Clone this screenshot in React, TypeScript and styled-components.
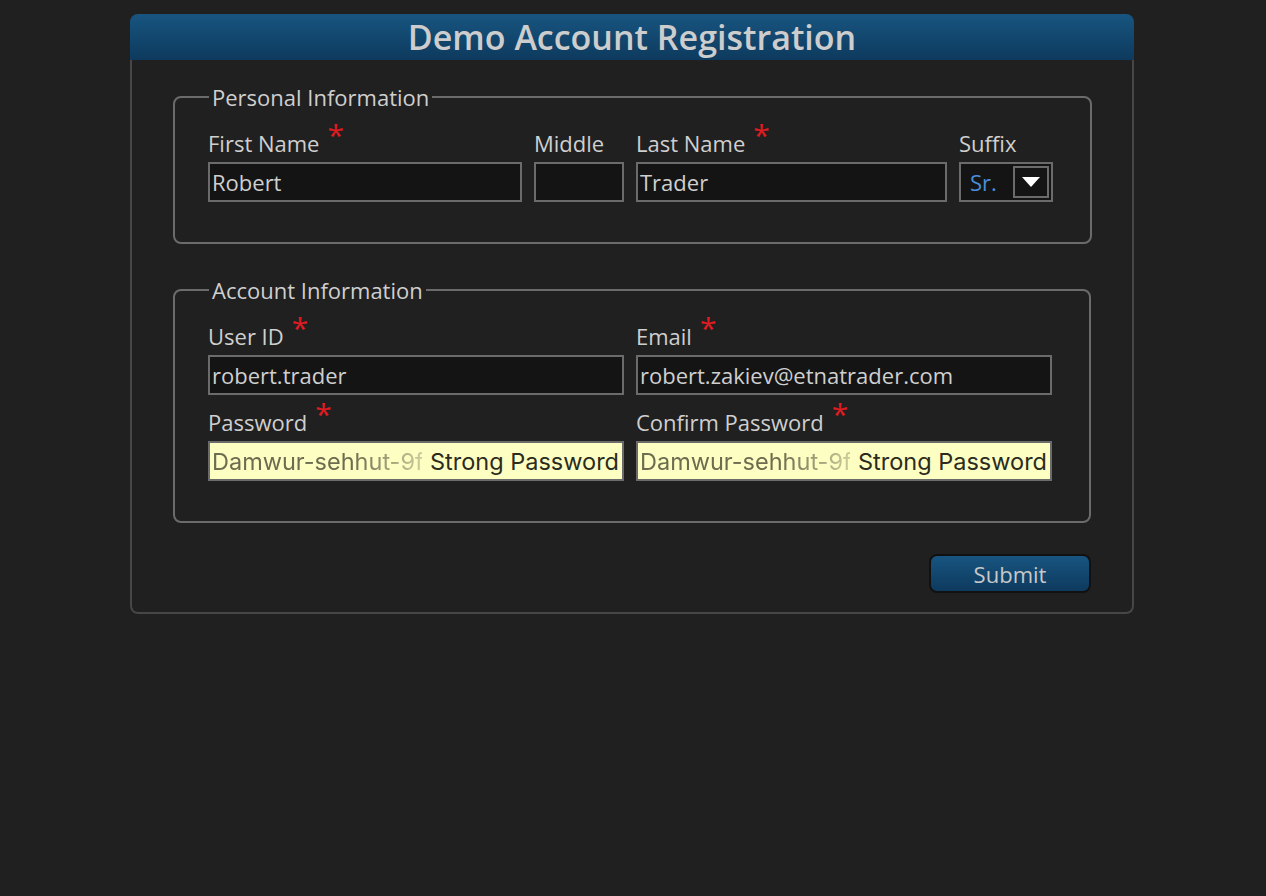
import React from "react";
import styled, { createGlobalStyle } from "styled-components";

const Global = createGlobalStyle`
  html, body { margin: 0; padding: 0; background: #202020; }
  body { font-family: "Open Sans", "Noto Sans", sans-serif; color: #cfcfcf; }
  * { box-sizing: border-box; }
`;

const Page = styled.div`
  width: 1266px;
  height: 896px;
  padding-top: 14px;
  display: flex;
  justify-content: center;
  padding-right: 2px;
`;

const Card = styled.div`
  width: 1004px;
  height: 600px;
  display: flex;
  flex-direction: column;
`;

const Header = styled.div`
  height: 46px;
  border-radius: 8px 8px 0 0;
  background: linear-gradient(#175580, #0e3a5e);
  display: flex;
  align-items: center;
  justify-content: center;
`;

const Title = styled.h1`
  margin: 0;
  font-size: 34px;
  font-weight: 600;
  color: #cdcdcd;
  line-height: 46px;
`;

const Body = styled.div`
  flex: 1;
  border: 2px solid #474747;
  border-top: none;
  border-radius: 0 0 8px 8px;
  padding: 25px 41px 0 41px;
  display: flex;
  flex-direction: column;
`;

const Fieldset = styled.fieldset<{ $h: number; $mb: number }>`
  margin: 0 0 ${(p) => p.$mb}px 0;
  height: ${(p) => p.$h}px;
  border: 2px solid #6b6b6b;
  border-radius: 8px;
  padding: 0 37px 0 33px;
  display: flex;
  flex-direction: column;
  gap: 6px;
`;

const Legend = styled.legend`
  font-size: 22px;
  color: #cfcfcf;
  padding: 0 3px;
  margin-left: 1px;
  line-height: 24px;
`;

const Row = styled.div<{ $cols: string }>`
  display: grid;
  grid-template-columns: ${(p) => p.$cols};
  column-gap: 12px;
`;

const Field = styled.div`
  display: flex;
  flex-direction: column;
`;

const Label = styled.label<{ $h?: number }>`
  font-size: 22px;
  color: #cfcfcf;
  height: ${(p) => p.$h ?? 53}px;
  display: flex;
  align-items: flex-end;
  padding-bottom: 4px;
  white-space: nowrap;
`;

const Star = styled.span`
  color: #e01b22;
  font-size: 30px;
  line-height: 1;
  align-self: flex-end;
  margin-left: 8px;
  margin-bottom: 8px;
`;

const Input = styled.div<{ $color?: string }>`
  height: 40px;
  border: 2px solid #6b6b6b;
  background: #141414;
  font-size: 22px;
  color: ${(p) => p.$color || "#cfcfcf"};
  display: flex;
  align-items: center;
  padding-left: 2px;
  position: relative;
  overflow: hidden;
  white-space: nowrap;
`;

const SelectBox = styled(Input)`
  justify-content: space-between;
  padding: 0 2px 0 9px;
`;

const DropBtn = styled.div`
  width: 36px;
  height: 32px;
  border: 2px solid #6b6b6b;
  display: flex;
  align-items: center;
  justify-content: center;
`;

const PwInput = styled.div`
  height: 40px;
  border: 2px solid #6b6b6b;
  background: #fdfec2;
  position: relative;
  overflow: hidden;
  display: flex;
  align-items: center;
  padding-left: 2px;
  font-family: Inter, "Liberation Sans", sans-serif;
  font-size: 23.5px;
  white-space: nowrap;
`;

const PwText = styled.span`
  color: #6c6c50;
  -webkit-mask-image: linear-gradient(90deg, #000 62%, rgba(0,0,0,0.2) 100%);
  mask-image: linear-gradient(90deg, #000 62%, rgba(0,0,0,0.2) 100%);
`;

const Strong = styled.span`
  position: absolute;
  right: 0;
  top: 0;
  bottom: 0;
  display: flex;
  align-items: center;
  padding: 0 3px 0 8px;
  background: #fdfec2;
  color: #2b2b1e;
`;

const Footer = styled.div`
  display: flex;
  justify-content: flex-end;
`;

const Button = styled.button`
  width: 162px;
  height: 39px;
  border-radius: 8px;
  border: 2px solid #111;
  background: linear-gradient(#175580, #0e3a5e);
  color: #c8c8c8;
  font-family: "Open Sans", sans-serif;
  font-size: 22px;
  padding: 0;
  display: flex;
  align-items: center;
  justify-content: center;
`;

const Req = () => <Star>*</Star>;

export default function App() {
  return (
    <>
      <Global />
      <Page>
        <Card>
          <Header>
            <Title>Demo Account Registration</Title>
          </Header>
          <Body>
            <Fieldset $h={159} $mb={34}>
              <Legend>Personal Information</Legend>
              <Row $cols="314px 90px 311px 94px">
                <Field>
                  <Label>First Name<Req /></Label>
                  <Input>Robert</Input>
                </Field>
                <Field>
                  <Label>Middle</Label>
                  <Input />
                </Field>
                <Field>
                  <Label>Last Name<Req /></Label>
                  <Input>Trader</Input>
                </Field>
                <Field>
                  <Label>Suffix</Label>
                  <SelectBox $color="#4a8edb">
                    Sr.
                    <DropBtn>
                      <svg width="20" height="12" viewBox="0 0 20 12">
                        <path d="M1 1 L19 1 L10 11 Z" fill="#fff" />
                      </svg>
                    </DropBtn>
                  </SelectBox>
                </Field>
              </Row>
            </Fieldset>
            <Fieldset $h={245} $mb={31}>
              <Legend>Account Information</Legend>
              <Row $cols="416px 416px">
                <Field>
                  <Label>User ID<Req /></Label>
                  <Input>robert.trader</Input>
                </Field>
                <Field>
                  <Label>Email<Req /></Label>
                  <Input>robert.zakiev@etnatrader.com</Input>
                </Field>
              </Row>
              <Row $cols="416px 416px">
                <Field>
                  <Label $h={40}>Password<Req /></Label>
                  <PwInput>
                    <PwText>Damwur-sehhut-9fa</PwText>
                    <Strong>Strong Password</Strong>
                  </PwInput>
                </Field>
                <Field>
                  <Label $h={40}>Confirm Password<Req /></Label>
                  <PwInput>
                    <PwText>Damwur-sehhut-9fa</PwText>
                    <Strong>Strong Password</Strong>
                  </PwInput>
                </Field>
              </Row>
            </Fieldset>
            <Footer>
              <Button>Submit</Button>
            </Footer>
          </Body>
        </Card>
      </Page>
    </>
  );
}
